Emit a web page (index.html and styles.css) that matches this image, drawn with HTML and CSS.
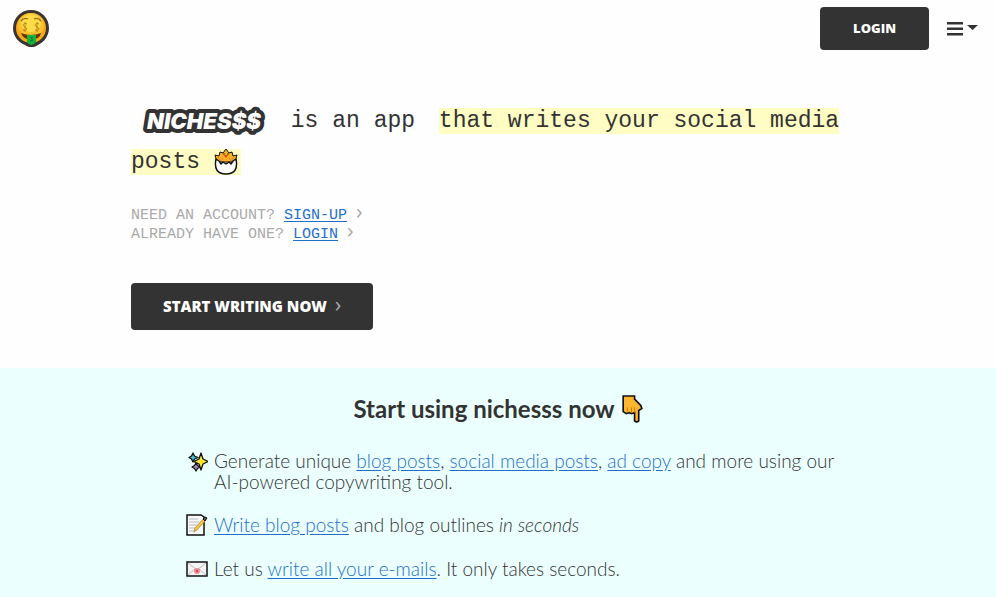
FILE: index.html
```html
<!DOCTYPE html>
<html lang="en">
<head>
  <meta charset="UTF-8">
  <meta name="viewport" content="width=device-width, initial-scale=1.0">
  <title>nichesss</title>
  <link rel="stylesheet" href="styles.css">
</head>
<body>
  <header class="topbar">
    <a href="#" class="home-link" aria-label="Home">
      <svg class="face" viewBox="0 0 36 37">
        <path d="M18 0a18 18 0 0 1 18 18c0 8-5 14-11 17-4 3-9 3-13 0C5 32 0 26 0 18A18 18 0 0 1 18 0z" fill="#3a352f"/>
        <circle cx="18" cy="18" r="15" fill="#f5a91b"/>
        <ellipse cx="18" cy="15" rx="13" ry="12" fill="#fbc02c"/>
        <ellipse cx="18" cy="13" rx="10" ry="9" fill="#ffdc45"/>
        <path d="M8 11q3-4 7-2M21 9q4-2 7 2" fill="none" stroke="#9a6410" stroke-width="1.3"/>
        <path d="M14 14c-4-2-5 2-2 3s2 4-2 3M12 12v10M26 14c-4-2-5 2-2 3s2 4-2 3M24 12v10" fill="none" stroke="#b8841a"/>
        <path d="M8 23q10 4 20 0-1 6-10 7-8-1-10-7z" fill="#66370c"/>
        <path d="M14 25h9v7q-5 6-9 0z" fill="#14b340"/>
        <path d="M20 27q-3 0-1 2t-2 2" fill="none" stroke="#067324"/>
      </svg>
    </a>
    <nav class="topbar-nav">
      <a href="#login" class="btn btn-login">LOGIN</a>
      <button type="button" class="menu-btn" aria-label="Menu">
        <svg width="32" height="14" viewBox="0 0 32 14" fill="#333">
          <path d="M0 0h16v2.500H0zM0 5.500h16V8H0zM0 11h16v2.500H0zM20 3h11l-5.500 5z"/>
        </svg>
      </button>
    </nav>
  </header>

  <main>
    <section class="hero">
      <h1>
        <svg class="wordmark" viewBox="0 0 126 30">
          <text class="wordmark-edge" x="6" y="23">NICHES$$</text>
        </svg>
        <span class="intro">is an app</span>
        <span class="highlight">that writes your social media posts <svg class="chick" viewBox="0 0 24 27">
          <path d="M3 14 1 7l4 1 1-4 3 1 3-4 3 4 3-1 1 4 4-1-2 7z" fill="#fbb02c" stroke="#111" stroke-linejoin="round"/>
          <path d="M4 9l3 4 2-3M20 9l-3 4-2-3" fill="none" stroke="#e0861a"/>
          <path d="M10 7h4l-2 3z" fill="#d9480f"/>
          <circle cx="10" cy="6" r=".7"/><circle cx="14" cy="6" r=".7"/>
          <path d="M2 11l3 2 2 3 2-2 3 2 3-2 2 2 2-3 3-2q3 15-10 15T2 11z" fill="#fff" stroke="#111" stroke-width="1.500" stroke-linejoin="round"/>
        </svg></span>
      </h1>
      <p class="account">
        NEED AN ACCOUNT? <a href="#signup">SIGN-UP</a> <span class="chevron">›</span><br>
        ALREADY HAVE ONE? <a href="#login">LOGIN</a> <span class="chevron">›</span>
      </p>
      <a href="#start" class="btn btn-start">START WRITING NOW <span class="chevron">›</span></a>
    </section>

    <section class="features">
      <h2>Start using nichesss now
        <svg class="hand" viewBox="0 0 20 27">
          <path d="M1 1h11v3l6 6 1 3-3 2v10q-2 2-4 0v-8l-3 1-2-1-3 1-3-2z" fill="#fdb62f" stroke="#111" stroke-width="1.600"/>
          <path d="M5 12v4M9 12v5M12 12v5" fill="none" stroke="#c97a0d"/>
        </svg>
      </h2>
      <ul>
        <li>
          <svg class="icon" viewBox="0 0 22 22" stroke="#111" stroke-width="1.300" stroke-linejoin="round">
            <path d="M7 3l1.500 3L12 7.500 8.500 9 7 12 5.500 9 3 7.500 5.500 6z" fill="#45bedb"/>
            <path d="M10 13l1.500 2.500L14 17l-2.500 1.500L10 21l-1.500-2.500L6 17l2.500-1.500z" fill="#a987b8"/>
            <path d="M15 3l2 6 5 2.500-5 2.500-2 6-2-6-5-2.500L13 9z" fill="#ffe92e"/>
          </svg>
          <p>Generate unique <a href="#blog">blog posts</a>, <a href="#social">social media posts</a>, <a href="#ads">ad copy</a> and more using our AI-powered copywriting tool.</p>
        </li>
        <li>
          <svg class="icon" viewBox="0 0 22 22">
            <path d="M1 1h14l3 2v18H1z" fill="#f8f8f8" stroke="#111" stroke-width="1.500"/>
            <path d="M3 5h9M3 8h10M3 11h8M3 14h6M3 17h5" stroke="#b9bcc4"/>
            <path d="M8 18l1-4 9-10 2 2-9 10z" fill="#f5c542" stroke="#9a7420" stroke-width=".6"/>
            <path d="M17 5l2-2 2 1-2 3z" fill="#555" stroke="#111"/>
          </svg>
          <p><a href="#write">Write blog posts</a> and blog outlines <em>in seconds</em></p>
        </li>
        <li>
          <svg class="icon" viewBox="0 0 22 22">
            <path d="M1 4h20v14H1z" fill="#f4f4f4" stroke="#111" stroke-width="1.500"/>
            <path d="M2 5l9 7 9-7M2 17l7-6M20 17l-7-6" fill="none" stroke="#bbb"/>
            <circle cx="11" cy="13" r="3" fill="#e98b96"/>
            <circle cx="11" cy="13" r="1" fill="#c8324a"/>
          </svg>
          <p>Let us <a href="#emails">write all your e-mails</a>. It only takes seconds.</p>
        </li>
      </ul>
    </section>
  </main>
</body>
</html>
```

FILE: styles.css
```css
* {
  box-sizing: border-box;
}
body {
  margin: 0;
  background: #fefefe;
  color: #333;
  font-family: Lato, sans-serif;
}
a {
  color: #1f6fcb;
  text-underline-offset: 2px;
}
.topbar {
  display: flex;
  justify-content: space-between;
  align-items: center;
  padding: 7px 17px 7px 13px;
}
.home-link,
.topbar-nav {
  display: flex;
}
.topbar-nav {
  align-items: center;
  gap: 18px;
}
.face {
  width: 36px;
  height: 37px;
}
.menu-btn {
  display: flex;
  padding: 0;
  border: 0;
  background: none;
}
.btn {
  display: inline-block;
  border-radius: 4px;
  background: #333;
  color: #fff;
  font-family: "Open Sans", sans-serif;
  font-weight: 800;
  text-decoration: none;
}
.btn-login {
  padding: 0 33px;
  font-size: 13px;
  line-height: 43px;
}
.hero {
  padding: 44px 131px 38px;
}
h1 {
  margin: 0;
  font-family: "Liberation Mono", monospace;
  font-size: 23px;
  font-weight: 400;
  line-height: 41px;
}
.wordmark {
  width: 126px;
  height: 30px;
  margin-left: 10px;
  vertical-align: middle;
}
.wordmark-edge {
  fill: #fff;
  stroke: #333;
  stroke-width: 8px;
  stroke-linejoin: round;
  paint-order: stroke;
  font-family: Inter, sans-serif;
  font-size: 22px;
  font-style: italic;
  font-weight: 900;
}
.intro {
  margin: 0 10px;
}
.highlight {
  padding-right: 3px;
  background: #fffdc4;
}
.chick {
  width: 24px;
  height: 27px;
  vertical-align: middle;
}
.account {
  margin: 23px 0 39px;
  color: #aaa;
  font-family: "Liberation Mono", monospace;
  font-size: 15px;
  line-height: 19px;
}
.chevron {
  color: #aaa;
  font-family: "Open Sans", sans-serif;
  font-size: 22px;
  font-weight: 400;
  line-height: 1px;
}
.btn-start {
  padding: 0 32px;
  font-size: 15px;
  line-height: 47px;
}
.btn-start .chevron {
  margin-left: 4px;
}
.features {
  padding: 24px 131px 0;
  background: #ebfffe;
}
h2 {
  display: flex;
  justify-content: center;
  align-items: center;
  gap: 7px;
  margin: 0 0 24px;
  font-size: 24px;
  line-height: 34px;
}
.hand {
  width: 21px;
  height: 28px;
}
ul {
  margin: 0;
  padding: 0 16px 0 55px;
  list-style: none;
}
li {
  display: flex;
  gap: 6px;
  padding-bottom: 22px;
}
li p {
  margin: 0;
  font-size: 19px;
  font-weight: 300;
  line-height: 21px;
}
.icon {
  flex: none;
  width: 22px;
  height: 22px;
}
```
